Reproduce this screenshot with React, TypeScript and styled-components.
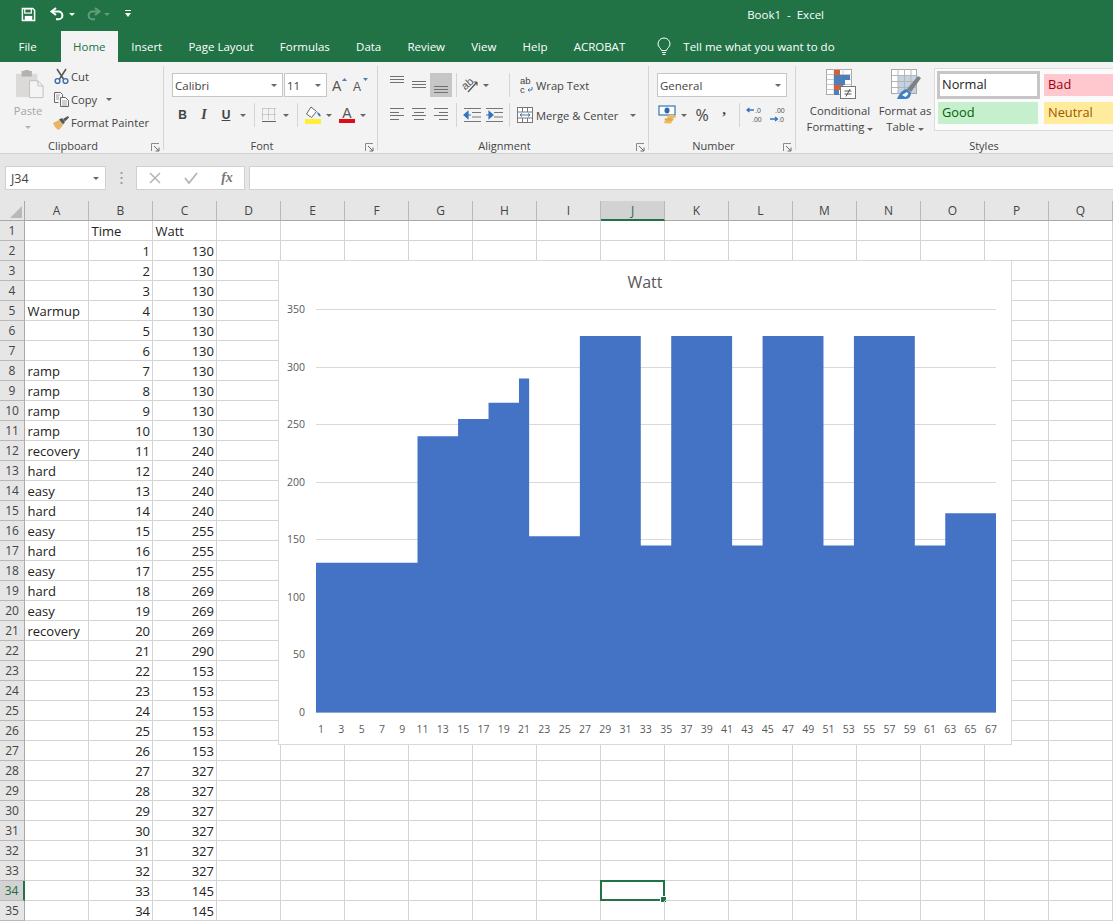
import React from 'react';
import styled, { createGlobalStyle } from 'styled-components';

const UI_FONT = '"Open Sans", "Noto Sans", "Liberation Sans", sans-serif';
const GREEN = '#217346';

const GlobalStyle = createGlobalStyle`
  html, body { margin: 0; padding: 0; background: #fff; }
  body { font-family: ${UI_FONT}; color: #444; }
`;

const Page = styled.div`
  width: 1113px;
  height: 921px;
  overflow: hidden;
  display: flex;
  flex-direction: column;
`;

/* title bar + tabs */
const TitleBar = styled.div`
  height: 31px;
  box-sizing: border-box;
  background: ${GREEN};
  display: flex;
  align-items: center;
  padding: 0 289px 3px 21px;
  flex: none;
`;
const DocTitle = styled.div`
  margin-left: auto;
  color: #fff;
  font-size: 11.5px;
  white-space: pre;
`;
const TabBar = styled.div`
  height: 31px;
  background: ${GREEN};
  display: flex;
  padding-left: 5.4px;
  flex: none;
`;
const Tab = styled.div<{ $active?: boolean; $gapAfter?: number }>`
  height: 31px;
  line-height: 31px;
  padding: 0 ${(p) => (p.$active ? 12.5 : 13.1)}px;
  font-size: 11.5px;
  color: ${(p) => (p.$active ? GREEN : '#fff')};
  background: ${(p) => (p.$active ? '#f3f3f3' : 'transparent')};
  margin-right: ${(p) => p.$gapAfter || 0}px;
  white-space: nowrap;
`;
const TellMe = styled.div`
  margin-left: 19px;
  display: flex;
  align-items: center;
  gap: 12px;
  color: #fff;
  font-size: 11.5px;
`;

/* ribbon */
const Ribbon = styled.div`
  height: 92px;
  background: #f3f3f3;
  border-bottom: 1px solid #d0d0d0;
  display: flex;
  padding-top: 4px;
  box-sizing: border-box;
  overflow: hidden;
  flex: none;
`;
const Group = styled.div<{ $width: number; $pad?: number; $last?: boolean }>`
  width: ${(p) => p.$width}px;
  height: 84px;
  flex: none;
  box-sizing: border-box;
  border-right: ${(p) => (p.$last ? 'none' : '1px solid #d4d4d4')};
  padding-left: ${(p) => p.$pad || 0}px;
  display: flex;
  flex-direction: column;
`;
const GroupBody = styled.div`
  height: 72px;
  flex: none;
  display: flex;
`;
const StackedRows = styled.div`
  padding-top: 7px;
  display: flex;
  flex-direction: column;
  gap: 6px;
`;
const ToolRow = styled.div`
  display: flex;
  align-items: center;
  height: 24px;
`;
const GroupLabel = styled.div<{ $pad?: number; $plain?: boolean }>`
  position: relative;
  height: 16px;
  line-height: 16px;
  margin-left: -${(p) => p.$pad || 0}px;
  padding-right: ${(p) => (p.$plain ? 0 : 17)}px;
  text-align: center;
  font-size: 11px;
  color: #444;
  flex: none;
`;
const Launcher = styled.svg`
  position: absolute;
  right: 3px;
  top: 5px;
`;
const Combo = styled.div<{ $width: number }>`
  width: ${(p) => p.$width}px;
  height: 24px;
  box-sizing: border-box;
  background: #fff;
  border: 1px solid #c6c6c6;
  display: flex;
  align-items: center;
  justify-content: space-between;
  padding: 0 5px 0 2px;
  font-size: 11.5px;
  color: #444;
`;
const Caret = styled.span<{ $light?: boolean }>`
  display: inline-block;
  width: 0;
  height: 0;
  flex: none;
  border-left: 3px solid transparent;
  border-right: 3px solid transparent;
  border-top: 3px solid ${(p) => (p.$light ? '#b5b5b5' : '#666')};
`;
const Tool = styled.div<{ $w: number; $on?: boolean; $after?: number }>`
  width: ${(p) => p.$w}px;
  height: 24px;
  flex: none;
  display: flex;
  align-items: center;
  justify-content: center;
  background: ${(p) => (p.$on ? '#c6c6c6' : 'transparent')};
  margin-right: ${(p) => p.$after || 0}px;
  color: #444;
`;
const Sep = styled.div<{ $l: number; $r: number }>`
  width: 1px;
  height: 24px;
  flex: none;
  background: #d4d4d4;
  margin: 0 ${(p) => p.$r}px 0 ${(p) => p.$l}px;
`;
const LetterTool = styled.span<{ $italic?: boolean; $under?: boolean }>`
  font-family: "Liberation Serif", serif;
  font-size: 14px;
  font-weight: 700;
  color: #444;
  font-style: ${(p) => (p.$italic ? 'italic' : 'normal')};
  text-decoration: ${(p) => (p.$under ? 'underline' : 'none')};
`;
const BoldSans = styled(LetterTool)`
  font-family: "Liberation Sans", sans-serif;
  font-size: 12px;
`;
const ToolText = styled.span<{ $gap?: number }>`
  font-size: 11.2px;
  white-space: nowrap;
  margin-left: ${(p) => p.$gap || 0}px;
  color: #444;
`;
const Percent = styled.span`
  font-size: 16px;
  color: #444;
`;
const Comma = styled.span`
  font-family: "Liberation Serif", serif;
  font-weight: 700;
  font-size: 15px;
  color: #444;
  line-height: 10px;
  margin-bottom: 12px;
`;

const PasteCol = styled.div`
  width: 30px;
  margin-left: 13px;
  padding-top: 3px;
  display: flex;
  flex-direction: column;
  align-items: center;
  gap: 3px;
  & > svg { margin-left: 4px; }
`;
const PasteLabel = styled.div`
  font-size: 11.2px;
  line-height: 16px;
  color: #a6a6a6;
  margin-bottom: 4px;
`;
const ClipList = styled.div`
  margin-left: 10px;
`;
const ClipRow = styled.div<{ $h: number }>`
  display: flex;
  align-items: center;
  height: ${(p) => p.$h}px;
`;
const ClipIcon = styled.div`
  width: 16px;
  display: flex;
  justify-content: center;
  flex: none;
`;

const LargeTool = styled.div<{ $w: number }>`
  width: ${(p) => p.$w}px;
  flex: none;
  display: flex;
  flex-direction: column;
  align-items: center;
  padding-top: 3px;
  & > svg { margin-left: 2px; }
`;
const LargeText = styled.div`
  margin-top: 4px;
  font-size: 11.3px;
  line-height: 16px;
  text-align: center;
  white-space: nowrap;
  color: #444;
`;
const Gallery = styled.div`
  width: 200px;
  height: 63px;
  margin-top: 2px;
  box-sizing: border-box;
  border: 1px solid #dcdcdc;
  background: #fbfbfb;
  padding: 2px 0 0 2px;
  display: grid;
  grid-template-columns: 103px 1fr;
  grid-template-rows: 28px 22px;
  column-gap: 4px;
  row-gap: 3px;
`;
const StyleCell = styled.div<{ $bg: string; $fg: string; $sel?: boolean }>`
  background: ${(p) => p.$bg};
  color: ${(p) => p.$fg};
  font-size: 12.8px;
  display: flex;
  align-items: center;
  box-sizing: border-box;
  padding: 0 0 2px ${(p) => (p.$sel ? 2 : 4)}px;
  border: ${(p) => (p.$sel ? '3px solid #c6c6c6' : 'none')};
  margin: ${(p) => (p.$sel ? '0' : '3px 0')};
`;
const GoodCell = styled(StyleCell)`
  margin: 0 2px 0 1px;
`;
const NeutralCell = styled(StyleCell)`
  margin: 0;
`;

/* formula bar */
const FormulaStrip = styled.div`
  height: 47px;
  background: #e6e6e6;
  flex: none;
  padding: 12px 0 0 5px;
  box-sizing: border-box;
  display: flex;
  align-items: flex-start;
`;
const FormulaBox = styled.div<{ $w?: number }>`
  height: 24px;
  box-sizing: border-box;
  background: #fff;
  border: 1px solid #d0d0d0;
  ${(p) => (p.$w ? `width: ${p.$w}px; flex: none;` : 'flex: 1; margin-right: -2px;')}
  display: flex;
  align-items: center;
`;
const NameBox = styled(FormulaBox)`
  justify-content: space-between;
  padding: 0 6px 0 5px;
  font-size: 12.5px;
  color: #444;
`;
const Grip = styled.div`
  width: 30px;
  flex: none;
  display: flex;
  justify-content: center;
  padding-top: 5px;
`;
const FxButton = styled.div`
  width: 36px;
  height: 22px;
  display: flex;
  align-items: center;
  justify-content: center;
  flex: none;
`;
const FxText = styled.span`
  font-family: "Liberation Serif", serif;
  font-style: italic;
  font-weight: 700;
  font-size: 14px;
  color: #777;
`;

/* sheet */
const SheetArea = styled.div`
  position: relative;
  flex: 1;
  display: grid;
  grid-template-columns: 25px repeat(17, 64px);
  grid-auto-rows: 20px;
  background: #fff;
`;
const Corner = styled.div`
  background: #e6e6e6;
  border-right: 1px solid #a9a9a9;
  border-bottom: 1px solid #a9a9a9;
  box-sizing: border-box;
  position: relative;
  &::after {
    content: '';
    position: absolute;
    right: 2px;
    bottom: 2px;
    border-left: 12px solid transparent;
    border-bottom: 12px solid #b9b9b9;
  }
`;
const ColHead = styled.div<{ $on?: boolean }>`
  box-sizing: border-box;
  background: ${(p) => (p.$on ? '#d2d2d2' : '#e6e6e6')};
  border-right: 1px solid #b9b9b9;
  border-bottom: ${(p) => (p.$on ? `2px solid ${GREEN}` : '1px solid #a9a9a9')};
  text-align: center;
  font-size: 12px;
  line-height: 19px;
  color: ${(p) => (p.$on ? '#1e6b41' : '#444')};
`;
const RowHead = styled.div<{ $on?: boolean }>`
  box-sizing: border-box;
  background: ${(p) => (p.$on ? '#d2d2d2' : '#e6e6e6')};
  border-right: ${(p) => (p.$on ? `2px solid ${GREEN}` : '1px solid #a9a9a9')};
  border-bottom: 1px solid #b9b9b9;
  text-align: center;
  font-size: 12px;
  line-height: 19px;
  color: ${(p) => (p.$on ? '#1e6b41' : '#444')};
`;
const Cell = styled.div<{ $right?: boolean }>`
  position: relative;
  box-sizing: border-box;
  border-right: 1px solid #d4d4d4;
  border-bottom: 1px solid #d4d4d4;
  font-size: 13px;
  line-height: 20px;
  color: #222;
  padding: 0 2px 0 2.5px;
  text-align: ${(p) => (p.$right ? 'right' : 'left')};
  white-space: nowrap;
`;
const Selection = styled.div`
  position: absolute;
  left: -1px;
  top: -1px;
  right: -1px;
  bottom: -1px;
  border: 2px solid ${GREEN};
  &::after {
    content: '';
    position: absolute;
    right: -4px;
    bottom: -4px;
    width: 5px;
    height: 5px;
    background: ${GREEN};
    border: 1px solid #fff;
  }
`;

/* chart floats over the cells */
const ChartCard = styled.div`
  position: absolute;
  left: 278px;
  top: 59px;
  width: 734px;
  height: 485px;
  box-sizing: border-box;
  background: #fff;
  border: 1px solid #d9d9d9;
`;
const ChartTitle = styled.div`
  height: 41px;
  padding-top: 8px;
  box-sizing: border-box;
  text-align: center;
  font-size: 16px;
  line-height: 26px;
  color: #595959;
`;
const ChartSvg = styled.svg`
  display: block;
  font-family: ${UI_FONT};
`;

const Ico = styled.svg`
  display: block;
  flex: none;
  overflow: visible;
`;

const SaveIcon = () => (
  <Ico width="15" height="15" viewBox="0 0 16 16" style={{ marginRight: 14 }}>
    <path d="M1.500 1.500h11l2 2v11h-13z" fill="none" stroke="#fff" strokeWidth="1.600" />
    <rect x="4" y="2" width="7" height="4.500" fill="none" stroke="#fff" strokeWidth="1.300" />
    <rect x="4" y="9.500" width="8" height="4.500" fill="#fff" />
  </Ico>
);
const ArrowIcon = ({ faded, flip }: { faded?: boolean; flip?: boolean }) => (
  <Ico
    width="16"
    height="14"
    viewBox="0 0 16 14"
    style={{ opacity: faded ? 0.3 : 1, transform: flip ? 'scaleX(-1)' : undefined }}
  >
    <path d="M6 1L1.500 4.500 6 8" fill="none" stroke="#fff" strokeWidth="2" />
    <path d="M2 4.500h6.500a3.800 3.800 0 0 1 0 7.800H6" fill="none" stroke="#fff" strokeWidth="2" />
  </Ico>
);
const QatCaret = styled.span<{ $faded?: boolean }>`
  width: 0;
  height: 0;
  border-left: 3px solid transparent;
  border-right: 3px solid transparent;
  border-top: 3px solid #fff;
  margin: 0 ${(p) => (p.$faded ? 14 : 10)}px 0 3px;
  opacity: ${(p) => (p.$faded ? 0.3 : 1)};
`;
const CustomizeIcon = () => (
  <Ico width="8" height="8" viewBox="0 0 8 8">
    <rect x="1" y="0" width="6" height="1" fill="#fff" />
    <path d="M1 3h6L4 7z" fill="#fff" />
  </Ico>
);
const BulbIcon = () => (
  <Ico width="14" height="18" viewBox="0 0 14 18">
    <path
      d="M4.500 12.500C4 10 1 9 1 6a6 6 0 0 1 12 0c0 3-3 4-3.500 6.500z"
      fill="none"
      stroke="#fff"
      strokeWidth="1"
    />
    <path d="M5 14.500h4M5.500 16.500h3" stroke="#fff" strokeWidth="1" />
  </Ico>
);
const PasteIcon = () => (
  <Ico width="28" height="31" viewBox="0 0 30 31">
    <rect x="0" y="4" width="23" height="25" fill="#dcd9d9" />
    <rect x="6" y="1" width="11" height="6" fill="#b5b1b1" />
    <rect x="9" y="0" width="5" height="3" fill="#b5b1b1" />
    <path d="M14.500 11.500h9l5.500 5.500v12.500H14.500z" fill="#f4f4f4" stroke="#bdbdbd" />
    <path d="M23.500 11.500v5.500h5.500" fill="none" stroke="#bdbdbd" />
  </Ico>
);
const CutIcon = () => (
  <Ico width="15" height="15" viewBox="0 0 15 15">
    <path d="M3 0l6.500 10M12 0L5.500 10" stroke="#555" strokeWidth="1.500" />
    <circle cx="3.500" cy="12" r="2.400" fill="none" stroke="#3a6ea8" strokeWidth="1.400" />
    <circle cx="11.500" cy="12" r="2.400" fill="none" stroke="#3a6ea8" strokeWidth="1.400" />
  </Ico>
);
const CopyIcon = () => (
  <Ico width="15" height="15" viewBox="0 0 15 15">
    <path d="M.5.500h6l2 2v3M.5.500v10h4" fill="#fff" stroke="#666" />
    <path d="M6.500 5.500h5l3 3v6h-8z" fill="#fff" stroke="#666" />
    <path d="M2 3h4M2 5h3M2 7h3M8 9h5M8 11h5M8 13h5" stroke="#888" strokeWidth=".8" />
  </Ico>
);
const BrushIcon = () => (
  <Ico width="18" height="15" viewBox="0 0 18 15">
    <path d="M1 8l6-3 4 5-4 5C4 14 2 11 1 8z" fill="#e6b565" />
    <path d="M7 4.500l3-1.500 3 4-2 2.500z" fill="#555" />
    <path d="M11 4l5-3 1 1.500-4 4z" fill="#555" />
  </Ico>
);
const GrowFontIcon = ({ up }: { up?: boolean }) => (
  <Ico width="18" height="16" viewBox="0 0 18 16">
    <text x="1" y="14" fontSize={up ? 14 : 12} fontFamily="Liberation Sans" fill="#555">
      A
    </text>
    <path d={up ? 'M11 4h5l-2.500-3z' : 'M11 1h5l-2.500 3z'} fill="#4a7ebb" />
  </Ico>
);
const BorderIcon = () => (
  <Ico width="14" height="14" viewBox="0 0 14 14">
    <path
      d="M.5.500h13M.5 6.500h13M.5.500v12M6.500.500v12M12.500.500v12"
      stroke="#a6a6a6"
      strokeDasharray="1 1"
      strokeWidth="1"
    />
    <path d="M0 13.500h14" stroke="#666" strokeWidth="1" />
  </Ico>
);
const FillIcon = () => (
  <Ico width="17" height="18" viewBox="0 0 17 18">
    <path d="M6 1l-4.500 7 5 3.500 5-6z" fill="#fff" stroke="#666" />
    <path d="M12 6c2 1 4 2 3.500 4.500-1.500 0-3-2-3.500-4.500z" fill="#3c6ea8" />
    <rect x="0" y="13" width="16" height="5" fill="#ffee33" />
  </Ico>
);
const FontColorIcon = () => (
  <Ico width="16" height="16" viewBox="0 0 16 16">
    <text x="8" y="11" textAnchor="middle" fontSize="14" fontFamily="Liberation Sans" fill="#555">
      A
    </text>
    <rect x="0" y="12" width="16" height="4" fill="#e00b14" />
  </Ico>
);
const LinesIcon = ({ lines, pad = 0 }: { lines: number[][]; pad?: number }) => (
  <Ico width="16" height="14" viewBox="0 0 16 14" style={{ marginTop: pad }}>
    {lines.map(([x1, x2, y], i) => (
      <path key={i} d={`M${x1} ${y + 0.5}H${x2}`} stroke="#707070" strokeWidth="1" />
    ))}
  </Ico>
);
const OrientIcon = () => (
  <Ico width="18" height="16" viewBox="0 0 18 16">
    <text
      x="1"
      y="11"
      fontSize="11"
      fontFamily="Liberation Sans"
      fill="#555"
      transform="rotate(-42 6 8)"
    >
      ab
    </text>
    <path d="M7 15L16 5M16 5h-3.500M16 5v3.500" stroke="#555" fill="none" strokeWidth="1.200" />
  </Ico>
);
const IndentIcon = ({ flip }: { flip?: boolean }) => (
  <Ico width="17" height="14" viewBox="0 0 17 14">
    <path d="M0 .500h17M0 13.500h17M8 4.500h9M8 9h9" stroke="#777" strokeWidth="1" />
    <path
      d={flip ? 'M0 7h5M3 3.500L7 7l-4 3.500z' : 'M7 7H2M4 3.500L0 7l4 3.500z'}
      stroke="#2f76c1"
      fill="#2f76c1"
      strokeWidth="1.200"
    />
  </Ico>
);
const WrapIcon = () => (
  <Ico width="14" height="18" viewBox="0 0 14 18">
    <text x="0" y="7.500" fontSize="9.500" fontFamily="Liberation Sans" fill="#444">
      ab
    </text>
    <text x="0" y="17" fontSize="9.500" fontFamily="Liberation Sans" fill="#444">
      c
    </text>
    <path d="M12 11v3H8M9.500 12.500L8 14l1.500 1.500" fill="none" stroke="#3c78b8" strokeWidth="1" />
  </Ico>
);
const MergeIcon = () => (
  <Ico width="16" height="16" viewBox="0 0 16 16">
    <rect x=".5" y=".5" width="15" height="15" fill="#fff" stroke="#777" />
    <path d="M.5 5h15M.5 11h15M5.500.500V5M10.500.500V5M5.500 11v4.500M10.500 11v4.500" stroke="#777" />
    <path d="M3 8h10M5 6.500L3 8l2 1.500M11 6.500L13 8l-2 1.500" fill="none" stroke="#3c78b8" />
  </Ico>
);
const CurrencyIcon = () => (
  <Ico width="18" height="18" viewBox="0 0 18 18">
    <rect x="0" y="0" width="16" height="9" fill="#fff" stroke="#3576b5" strokeWidth="1.200" />
    <ellipse cx="8" cy="4.500" rx="2.500" ry="3" fill="#2c6aa8" />
    <ellipse cx="12.500" cy="10.500" rx="4.500" ry="1.800" fill="#eeba62" />
    <ellipse cx="10" cy="13.500" rx="4.500" ry="1.800" fill="#e6a947" />
    <ellipse cx="9" cy="16" rx="4" ry="1.600" fill="#eeba62" />
  </Ico>
);
const DecimalIcon = ({ more }: { more?: boolean }) => (
  <Ico width="18" height="18" viewBox="0 0 18 18">
    <text x={more ? 6 : 9} y="7" fontSize="7" fontFamily="Liberation Sans" fill="#555">
      {more ? '.00' : '.0'}
    </text>
    <text x={more ? 9 : 6} y="15.500" fontSize="7" fontFamily="Liberation Sans" fill="#555">
      {more ? '.0' : '.00'}
    </text>
    <path
      d={more ? 'M1 13h7M6 11l2.500 2-2.500 2' : 'M1 4h7M3.500 2L1 4l2.500 2'}
      fill="none"
      stroke="#2f76c1"
      strokeWidth="1.300"
    />
  </Ico>
);
const CondFormatIcon = () => (
  <Ico width="30" height="30" viewBox="0 0 30 30">
    <rect x=".5" y=".5" width="25" height="25" fill="#fff" stroke="#a9a9a9" />
    <path d="M.5 5.500h25M.5 10.500h25M.5 15.500h25M.5 20.500h25M8 0v26M17 0v26" stroke="#c8c8c8" />
    <rect x="8" y="1" width="6" height="5" fill="#d2603c" />
    <rect x="8" y="6" width="16" height="5" fill="#4d80bb" />
    <rect x="8" y="11" width="11" height="5" fill="#4d80bb" />
    <rect x="8" y="16" width="9" height="5" fill="#d2603c" />
    <rect x="8" y="21" width="5" height="5" fill="#4d80bb" />
    <rect x="14.500" y="17.500" width="15" height="12" fill="#fff" stroke="#777" />
    <path d="M18.500 22h7M18.500 25h7M24 20l-4 7.500" stroke="#555" strokeWidth="1" fill="none" />
  </Ico>
);
const FormatTableIcon = () => (
  <Ico width="30" height="30" viewBox="0 0 30 30">
    <rect x=".5" y=".5" width="25" height="24" fill="#fff" stroke="#a9a9a9" />
    <rect x="7" y="7" width="18" height="17" fill="#c4d2e6" />
    <path d="M.5 6.500h25M.5 12.500h25M.5 18.500h25M7 0v25M13.500 0v25M20 0v25" stroke="#b5b5b5" />
    <path d="M16 20L27 7l3 2-10 14z" fill="#808080" />
    <path d="M6 30c2-5 5-9 10-10l4 4c0 3-2 6-5 6z" fill="#3d80c4" />
    <path d="M11 26l5-3 1.500 2-3 3z" fill="#fff" />
  </Ico>
);
const LauncherIcon = () => (
  <Launcher width="9" height="9" viewBox="0 0 9 9">
    <path d="M.5 8V.500H8" fill="none" stroke="#8a8a8a" />
    <path d="M3 3l5 5M8 4.500V8H4.500" fill="none" stroke="#6a6a6a" />
  </Launcher>
);

const WATT_RUNS: [number, number][] = [
  [130, 10], [240, 4], [255, 3], [269, 3], [290, 1], [153, 5], [327, 6], [145, 3],
  [327, 6], [145, 3], [327, 6], [145, 3], [327, 6], [145, 3], [173, 5],
];
const WATTS = WATT_RUNS.flatMap(([v, n]) => Array<number>(n).fill(v));
const NOTES: Record<number, string> = {
  5: 'Warmup', 8: 'ramp', 9: 'ramp', 10: 'ramp', 11: 'ramp', 12: 'recovery', 13: 'hard',
  14: 'easy', 15: 'hard', 16: 'easy', 17: 'hard', 18: 'easy', 19: 'hard', 20: 'easy', 21: 'recovery',
};
const COLS = 'ABCDEFGHIJKLMNOPQ'.split('');

// svg coordinates are local to the chart, top-left sits at page (279, 302)
const PLOT_X = 37;
const PLOT_W = 680;
const BASE_Y = 410.5;
const UNIT = 403 / 350;

const WattChart = () => {
  const step = PLOT_W / WATTS.length;
  let d = `M${PLOT_X} ${BASE_Y}`;
  WATTS.forEach((v, i) => {
    const y = BASE_Y - v * UNIT;
    d += `L${PLOT_X + i * step} ${y}L${PLOT_X + (i + 1) * step} ${y}`;
  });
  d += `L${PLOT_X + PLOT_W} ${BASE_Y}Z`;
  return (
    <ChartCard>
      <ChartTitle>Watt</ChartTitle>
      <ChartSvg width="732" height="441" viewBox="0 0 732 441">
        {[0, 50, 100, 150, 200, 250, 300, 350].map((t) => {
          const y = Math.floor(BASE_Y - t * UNIT) + 0.5;
          return (
            <g key={t}>
              <path d={`M${PLOT_X} ${y}H${PLOT_X + PLOT_W}`} stroke="#d9d9d9" />
              <text x="26" y={y + 3} textAnchor="end" fontSize="10.500" fill="#595959">
                {t}
              </text>
            </g>
          );
        })}
        <path d={d} fill="#4472c4" />
        {WATTS.map((_, i) =>
          i % 2 === 0 ? (
            <text
              key={i}
              x={PLOT_X + (i + 0.5) * step}
              y="431"
              textAnchor="middle"
              fontSize="10.500"
              fill="#595959"
            >
              {i + 1}
            </text>
          ) : null,
        )}
      </ChartSvg>
    </ChartCard>
  );
};

const Sheet = () => {
  const rows = Array.from({ length: 35 }, (_, i) => i + 1);
  return (
    <SheetArea>
      <Corner />
      {COLS.map((c) => (
        <ColHead key={c} $on={c === 'J'}>
          {c}
        </ColHead>
      ))}
      {rows.map((r) => (
        <React.Fragment key={r}>
          <RowHead $on={r === 34}>{r}</RowHead>
          {COLS.map((c) => {
            let text: React.ReactNode = null;
            let right = false;
            if (c === 'A') text = NOTES[r] || null;
            if (c === 'B') {
              text = r === 1 ? 'Time' : r - 1;
              right = r > 1;
            }
            if (c === 'C') {
              text = r === 1 ? 'Watt' : WATTS[r - 2];
              right = r > 1;
            }
            return (
              <Cell key={c} $right={right}>
                {text}
                {c === 'J' && r === 34 && <Selection />}
              </Cell>
            );
          })}
        </React.Fragment>
      ))}
      <WattChart />
    </SheetArea>
  );
};

const ALIGN_V = {
  top: [[1, 15, 0], [1, 15, 3], [1, 15, 6]],
  mid: [[1, 15, 3], [1, 15, 6], [1, 15, 9]],
  bot: [[1, 15, 8], [1, 15, 11], [1, 15, 14]],
};
const ALIGN_H = {
  left: [[1, 15, 0], [1, 10, 4], [1, 15, 7], [1, 10, 11]],
  center: [[1, 15, 0], [3, 13, 4], [1, 15, 7], [3, 13, 11]],
  right: [[1, 15, 0], [6, 15, 4], [1, 15, 7], [6, 15, 11]],
};

const RibbonBar = () => (
  <Ribbon>
    <Group $width={164}>
      <GroupBody>
        <PasteCol>
          <PasteIcon />
          <PasteLabel>Paste</PasteLabel>
          <Caret $light />
        </PasteCol>
        <ClipList>
          <ClipRow $h={20}>
            <ClipIcon><CutIcon /></ClipIcon>
            <ToolText $gap={2}>Cut</ToolText>
          </ClipRow>
          <ClipRow $h={27}>
            <ClipIcon><CopyIcon /></ClipIcon>
            <ToolText $gap={2}>Copy</ToolText>
            <Caret style={{ marginLeft: 9 }} />
          </ClipRow>
          <ClipRow $h={18}>
            <ClipIcon><BrushIcon /></ClipIcon>
            <ToolText $gap={2}>Format Painter</ToolText>
          </ClipRow>
        </ClipList>
      </GroupBody>
      <GroupLabel>Clipboard<LauncherIcon /></GroupLabel>
    </Group>

    <Group $width={214} $pad={8}>
      <GroupBody>
        <StackedRows>
          <ToolRow>
            <Combo $width={111}>Calibri<Caret /></Combo>
            <Combo $width={43} style={{ marginLeft: 1, marginRight: 2 }}>11<Caret /></Combo>
            <Tool $w={21}><GrowFontIcon up /></Tool>
            <Tool $w={21}><GrowFontIcon /></Tool>
          </ToolRow>
          <ToolRow>
            <Tool $w={21}><BoldSans>B</BoldSans></Tool>
            <Tool $w={22}><LetterTool $italic>I</LetterTool></Tool>
            <Tool $w={22}><BoldSans $under>U</BoldSans></Tool>
            <Tool $w={12}><Caret /></Tool>
            <Sep $l={5} $r={5} />
            <Tool $w={18} $after={2}><BorderIcon /></Tool>
            <Tool $w={12}><Caret /></Tool>
            <Sep $l={5} $r={5} />
            <Tool $w={20}><FillIcon /></Tool>
            <Tool $w={12} $after={2}><Caret /></Tool>
            <Tool $w={20}><FontColorIcon /></Tool>
            <Tool $w={12}><Caret /></Tool>
          </ToolRow>
        </StackedRows>
      </GroupBody>
      <GroupLabel $pad={8}>Font<LauncherIcon /></GroupLabel>
    </Group>

    <Group $width={271} $pad={8}>
      <GroupBody>
        <StackedRows>
          <ToolRow>
            <Tool $w={22}><LinesIcon lines={ALIGN_V.top} pad={-4} /></Tool>
            <Tool $w={22}><LinesIcon lines={ALIGN_V.mid} /></Tool>
            <Tool $w={22} $on><LinesIcon lines={ALIGN_V.bot} /></Tool>
            <Sep $l={4} $r={3} />
            <Tool $w={20}><OrientIcon /></Tool>
            <Tool $w={12}><Caret /></Tool>
            <Sep $l={17} $r={9} />
            <Tool $w={16}><WrapIcon /></Tool>
            <ToolText $gap={1}>Wrap Text</ToolText>
          </ToolRow>
          <ToolRow>
            <Tool $w={22}><LinesIcon lines={ALIGN_H.left} /></Tool>
            <Tool $w={22}><LinesIcon lines={ALIGN_H.center} /></Tool>
            <Tool $w={22}><LinesIcon lines={ALIGN_H.right} /></Tool>
            <Sep $l={4} $r={4} />
            <Tool $w={22}><IndentIcon /></Tool>
            <Tool $w={22}><IndentIcon flip /></Tool>
            <Sep $l={4} $r={7} />
            <Tool $w={16}><MergeIcon /></Tool>
            <ToolText $gap={3}>Merge &amp; Center</ToolText>
            <Caret style={{ marginLeft: 12 }} />
          </ToolRow>
        </StackedRows>
      </GroupBody>
      <GroupLabel $pad={8}>Alignment<LauncherIcon /></GroupLabel>
    </Group>

    <Group $width={147} $pad={8}>
      <GroupBody>
        <StackedRows>
          <ToolRow>
            <Combo $width={130}>General<Caret /></Combo>
          </ToolRow>
          <ToolRow>
            <Tool $w={21}><CurrencyIcon /></Tool>
            <Tool $w={11} $after={3}><Caret /></Tool>
            <Tool $w={20} $after={2}><Percent>%</Percent></Tool>
            <Tool $w={20}><Comma>,</Comma></Tool>
            <Sep $l={5} $r={5} />
            <Tool $w={20} $after={3}><DecimalIcon /></Tool>
            <Tool $w={20}><DecimalIcon more /></Tool>
          </ToolRow>
        </StackedRows>
      </GroupBody>
      <GroupLabel $pad={8}>Number<LauncherIcon /></GroupLabel>
    </Group>

    <Group $width={376} $pad={8} $last>
      <GroupBody>
        <LargeTool $w={72}>
          <CondFormatIcon />
          <LargeText>Conditional<br />Formatting <Caret /></LargeText>
        </LargeTool>
        <LargeTool $w={58}>
          <FormatTableIcon />
          <LargeText>Format as<br />Table <Caret /></LargeText>
        </LargeTool>
        <Gallery>
          <StyleCell $bg="#fff" $fg="#222" $sel>Normal</StyleCell>
          <StyleCell $bg="#ffc7ce" $fg="#9c0006">Bad</StyleCell>
          <GoodCell $bg="#c6efce" $fg="#006100">Good</GoodCell>
          <NeutralCell $bg="#ffeb9c" $fg="#9c5700">Neutral</NeutralCell>
        </Gallery>
      </GroupBody>
      <GroupLabel $pad={8} $plain>Styles</GroupLabel>
    </Group>
  </Ribbon>
);

const App: React.FC = () => (
  <Page>
    <GlobalStyle />
    <TitleBar>
      <SaveIcon />
      <ArrowIcon />
      <QatCaret />
      <ArrowIcon faded flip />
      <QatCaret $faded />
      <CustomizeIcon />
      <DocTitle>{'Book1  -  Excel'}</DocTitle>
    </TitleBar>
    <TabBar>
      <Tab $gapAfter={10.8}>File</Tab>
      <Tab $active>Home</Tab>
      <Tab>Insert</Tab>
      <Tab>Page Layout</Tab>
      <Tab>Formulas</Tab>
      <Tab>Data</Tab>
      <Tab>Review</Tab>
      <Tab>View</Tab>
      <Tab>Help</Tab>
      <Tab>ACROBAT</Tab>
      <TellMe>
        <BulbIcon />
        Tell me what you want to do
      </TellMe>
    </TabBar>
    <RibbonBar />
    <FormulaStrip>
      <NameBox $w={101}>J34<Caret /></NameBox>
      <Grip>
        <Ico width="3" height="13" viewBox="0 0 3 13">
          <path d="M1.500 1v2M1.500 6v2M1.500 11v2" stroke="#a0a0a0" strokeWidth="2" />
        </Ico>
      </Grip>
      <FormulaBox $w={109} style={{ marginRight: 4 }}>
        <FxButton>
          <Ico width="12" height="12" viewBox="0 0 12 12">
            <path d="M1 1l10 10M11 1L1 11" stroke="#b5b5b5" strokeWidth="1.500" />
          </Ico>
        </FxButton>
        <FxButton>
          <Ico width="14" height="12" viewBox="0 0 14 12">
            <path d="M1 6l4 5 8-10" fill="none" stroke="#b5b5b5" strokeWidth="1.800" />
          </Ico>
        </FxButton>
        <FxButton><FxText>fx</FxText></FxButton>
      </FormulaBox>
      <FormulaBox />
    </FormulaStrip>
    <Sheet />
  </Page>
);

export default App;
